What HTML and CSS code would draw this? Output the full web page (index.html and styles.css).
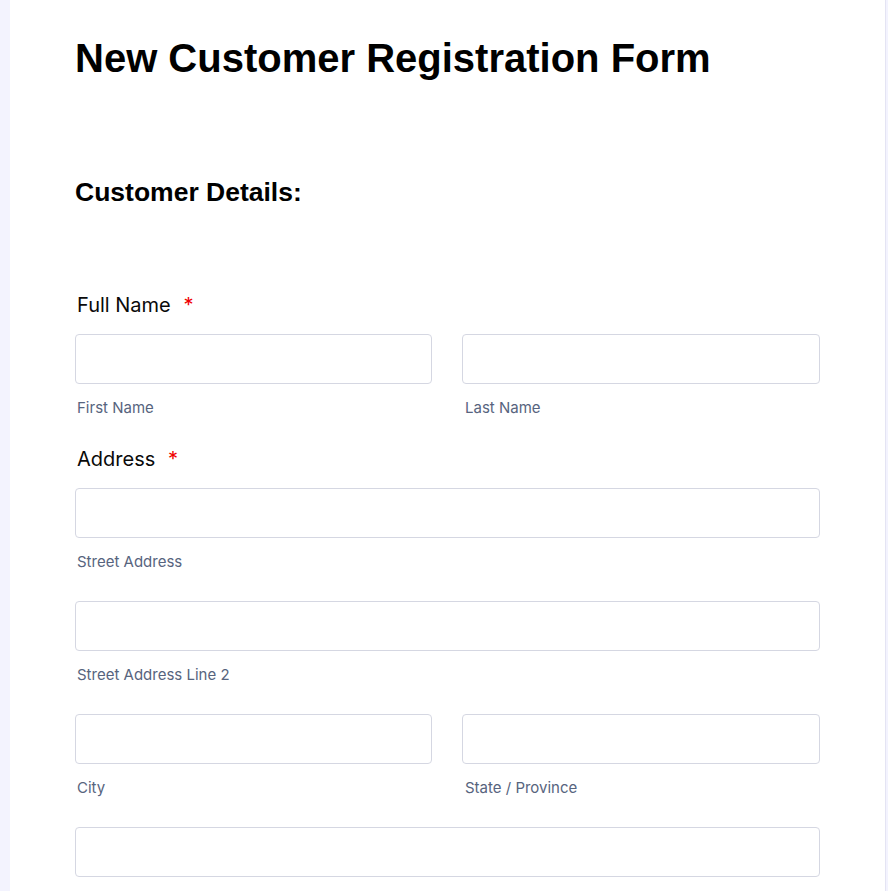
FILE: index.html
```html
<!DOCTYPE html>
<html lang="en">
<head>
<meta charset="utf-8">
<title>New Customer Registration Form</title>
<link rel="stylesheet" href="styles.css">
</head>
<body>
<main class="card">
  <h1 class="title">New Customer Registration Form</h1>
  <h2 class="section">Customer Details:</h2>

  <div class="field">
    <div class="label">Full Name <span class="req">*</span></div>
    <div class="row two">
      <div class="cell"><div class="input"></div><div class="sub">First Name</div></div>
      <div class="cell"><div class="input"></div><div class="sub">Last Name</div></div>
    </div>
  </div>

  <div class="field">
    <div class="label">Address <span class="req">*</span></div>
    <div class="row">
      <div class="cell"><div class="input"></div><div class="sub">Street Address</div></div>
    </div>
    <div class="row">
      <div class="cell"><div class="input"></div><div class="sub">Street Address Line 2</div></div>
    </div>
    <div class="row two">
      <div class="cell"><div class="input"></div><div class="sub">City</div></div>
      <div class="cell"><div class="input"></div><div class="sub">State / Province</div></div>
    </div>
    <div class="row">
      <div class="cell"><div class="input"></div></div>
    </div>
  </div>
</main>
</body>
</html>
```

FILE: styles.css
```css
html, body {
  margin: 0;
  padding: 0;
  background: #f3f3fe;
  height: 100%;
  overflow: hidden;
}

.card {
  margin-left: 10px;
  width: 875px;
  box-sizing: border-box;
  min-height: 100%;
  background: #ffffff;
  padding: 35px 65px 40px 65px;
  box-shadow: 1px 0 0 #e4e4f3;
}

.title {
  margin: 0;
  font-family: "Liberation Sans", Arial, sans-serif;
  font-weight: 700;
  font-size: 40px;
  line-height: 46px;
  color: #000;
}

.section {
  margin: 95px 0 0 0;
  font-family: "Liberation Sans", Arial, sans-serif;
  font-weight: 700;
  font-size: 26.5px;
  line-height: 32px;
  color: #000;
}

.field {
  margin-top: 84.7px;
}

.field + .field {
  margin-top: 28.7px;
}

.label {
  font-family: Inter, "Noto Sans", sans-serif;
  font-size: 20px;
  line-height: 24px;
  color: #0a0a0a;
  padding-left: 2px;
  margin-bottom: 17.3px;
}

.req {
  color: #f00000;
  margin-left: 7px;
}

.row {
  display: grid;
  grid-template-columns: 1fr;
  column-gap: 30px;
}

.row + .row {
  margin-top: 29px;
}

.row.two {
  grid-template-columns: 357px 1fr;
}

.input {
  height: 50px;
  box-sizing: border-box;
  border: 1px solid #d5d7e2;
  border-radius: 4px;
  background: #fff;
}

.sub {
  margin-top: 14px;
  font-family: Inter, "Noto Sans", sans-serif;
  font-size: 15px;
  line-height: 20px;
  color: #57647e;
  padding-left: 2px;
}

.row.two .cell + .cell .sub {
  padding-left: 3px;
}
```
